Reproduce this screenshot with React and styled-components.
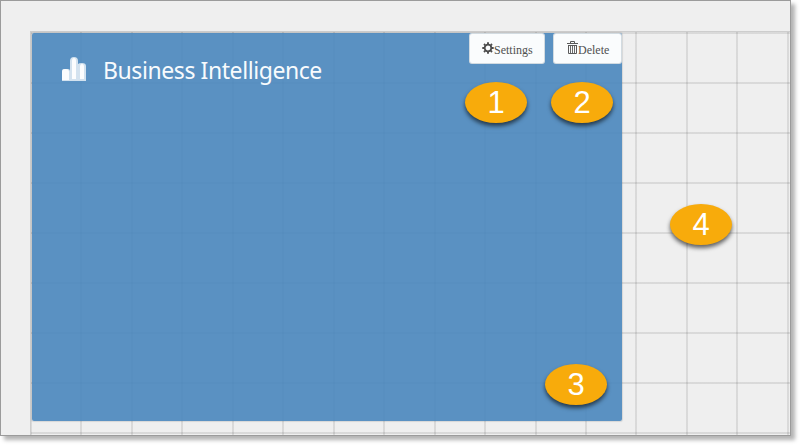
import React from 'react';
import styled, { createGlobalStyle } from 'styled-components';

const GlobalStyle = createGlobalStyle`
  * { box-sizing: border-box; }
  body { margin: 0; background: #fff; }
`;

const Page = styled.main`
  position: relative;
  width: 801px;
  height: 446px;
  overflow: hidden;
`;

const Frame = styled.section`
  width: 791px;
  height: 436px;
  padding: 30px 0 0 29px;
  background: #efefef;
  border: 1px solid #9b9b9b;
  box-shadow: 4px 4px 4px rgba(0, 0, 0, 0.3);
  overflow: hidden;
`;

const Board = styled.div`
  width: 760px;
  height: 404px;
  padding: 2px 0 0 2px;
  border-top: 1px solid #cdcdcd;
  border-left: 1px solid #cdcdcd;
  background-image:
    repeating-linear-gradient(to right, rgba(0, 0, 0, 0.09) 0 2px, transparent 2px 50.45px),
    repeating-linear-gradient(to bottom, rgba(0, 0, 0, 0.09) 0 2px, transparent 2px 50px);
  background-origin: border-box;
  background-position: 0 0, 0 1px;
`;

const Tile = styled.article`
  display: flex;
  justify-content: space-between;
  align-items: flex-start;
  width: 590px;
  height: 388px;
  margin: -1px 0 0 -1px;
  border-radius: 2px;
  background: rgba(73, 134, 188, 0.9);
  box-shadow: 0 0 1px 1px rgba(0, 0, 0, 0.1);
`;

const Heading = styled.header`
  display: flex;
  align-items: center;
  gap: 17px;
  height: 34px;
  margin: 20px 0 0 30px;

  svg { margin-top: -2px; }
`;

const Title = styled.h1`
  margin: 0;
  color: #f8fbfd;
  font: 400 23px/34px "Noto Sans", "Open Sans", sans-serif;
  letter-spacing: -0.42px;
  white-space: nowrap;
`;

const Actions = styled.div`
  display: flex;
  gap: 8px;
`;

const ActionButton = styled.button`
  display: flex;
  align-items: center;
  justify-content: flex-start;
  width: ${(p) => p.$width}px;
  height: 31px;
  padding: 2px 0 0 ${(p) => p.$inset}px;
  border: 1px solid rgba(200, 210, 218, 0.8);
  border-radius: 3px;
  background: rgba(255, 255, 255, 0.97);
  color: #505050;
  font: 12px/14px "Liberation Serif", serif;

  svg { flex: none; margin-top: -4px; }
`;

const Marker = styled.span`
  position: absolute;
  left: ${(p) => p.$x}px;
  top: ${(p) => p.$y}px;
  display: flex;
  align-items: center;
  justify-content: center;
  width: 62px;
  height: 41px;
  border-radius: 50%;
  background: #f8ab0b;
  box-shadow: 0 3px 4px rgba(0, 0, 0, 0.6);
  color: #fff;
  font: 31px/41px "Liberation Sans", Arial, sans-serif;
`;

const ChartIcon = () => (
  <svg width="24" height="24" viewBox="0 0 24 24">
    <path d="M0 24V14q0-2 2-2h4q2 0 2 2V4q0-4 4-4t4 4v3q1-1 4-1 4 0 4 3v15z" fill="#d3e2ef" />
    <path d="M0 23V15q0-3 3.5-3t3.5 3v8zM10 22V4q0-3 2-3t2 3v18zM18 22V10q0-3 2-3t2 3v12z" fill="#fcfdfe" />
  </svg>
);

const GearIcon = () => (
  <svg width="12" height="12" viewBox="0 0 12 12" fill="none" stroke="#4c4c4c">
    <circle cx="6" cy="6" r="3.3" strokeWidth="1.8" />
    <path d="M6 .3v2M6 9.7v2M.3 6h2M9.7 6h2M2 2l1.3 1.3M8.7 8.7L10 10M10 2L8.7 3.3M3.3 8.7L2 10" strokeWidth="1.9" />
  </svg>
);

const TrashIcon = () => (
  <svg width="11" height="13" viewBox="0 0 11 13" fill="none" stroke="#5a5a5a">
    <path d="M0 2.5h11M3.5 2.5v-2h4v2M1.5 4v8.5h8V4M1 4.5h9" />
    <path d="M3.5 5v7M5.5 5v7M7.5 5v7" strokeWidth="0.9" />
  </svg>
);

const markers = [
  { label: 1, x: 465, y: 82 },
  { label: 2, x: 551, y: 82 },
  { label: 3, x: 545, y: 364 },
  { label: 4, x: 670, y: 204 },
];

export default function App() {
  return (
    <Page>
      <GlobalStyle />
      <Frame>
        <Board>
          <Tile>
            <Heading>
              <ChartIcon />
              <Title>Business Intelligence</Title>
            </Heading>
            <Actions>
              <ActionButton $width={76} $inset={12}><GearIcon />Settings</ActionButton>
              <ActionButton $width={69} $inset={13}><TrashIcon />Delete</ActionButton>
            </Actions>
          </Tile>
        </Board>
      </Frame>
      {markers.map((m) => (
        <Marker key={m.label} $x={m.x} $y={m.y}>{m.label}</Marker>
      ))}
    </Page>
  );
}
